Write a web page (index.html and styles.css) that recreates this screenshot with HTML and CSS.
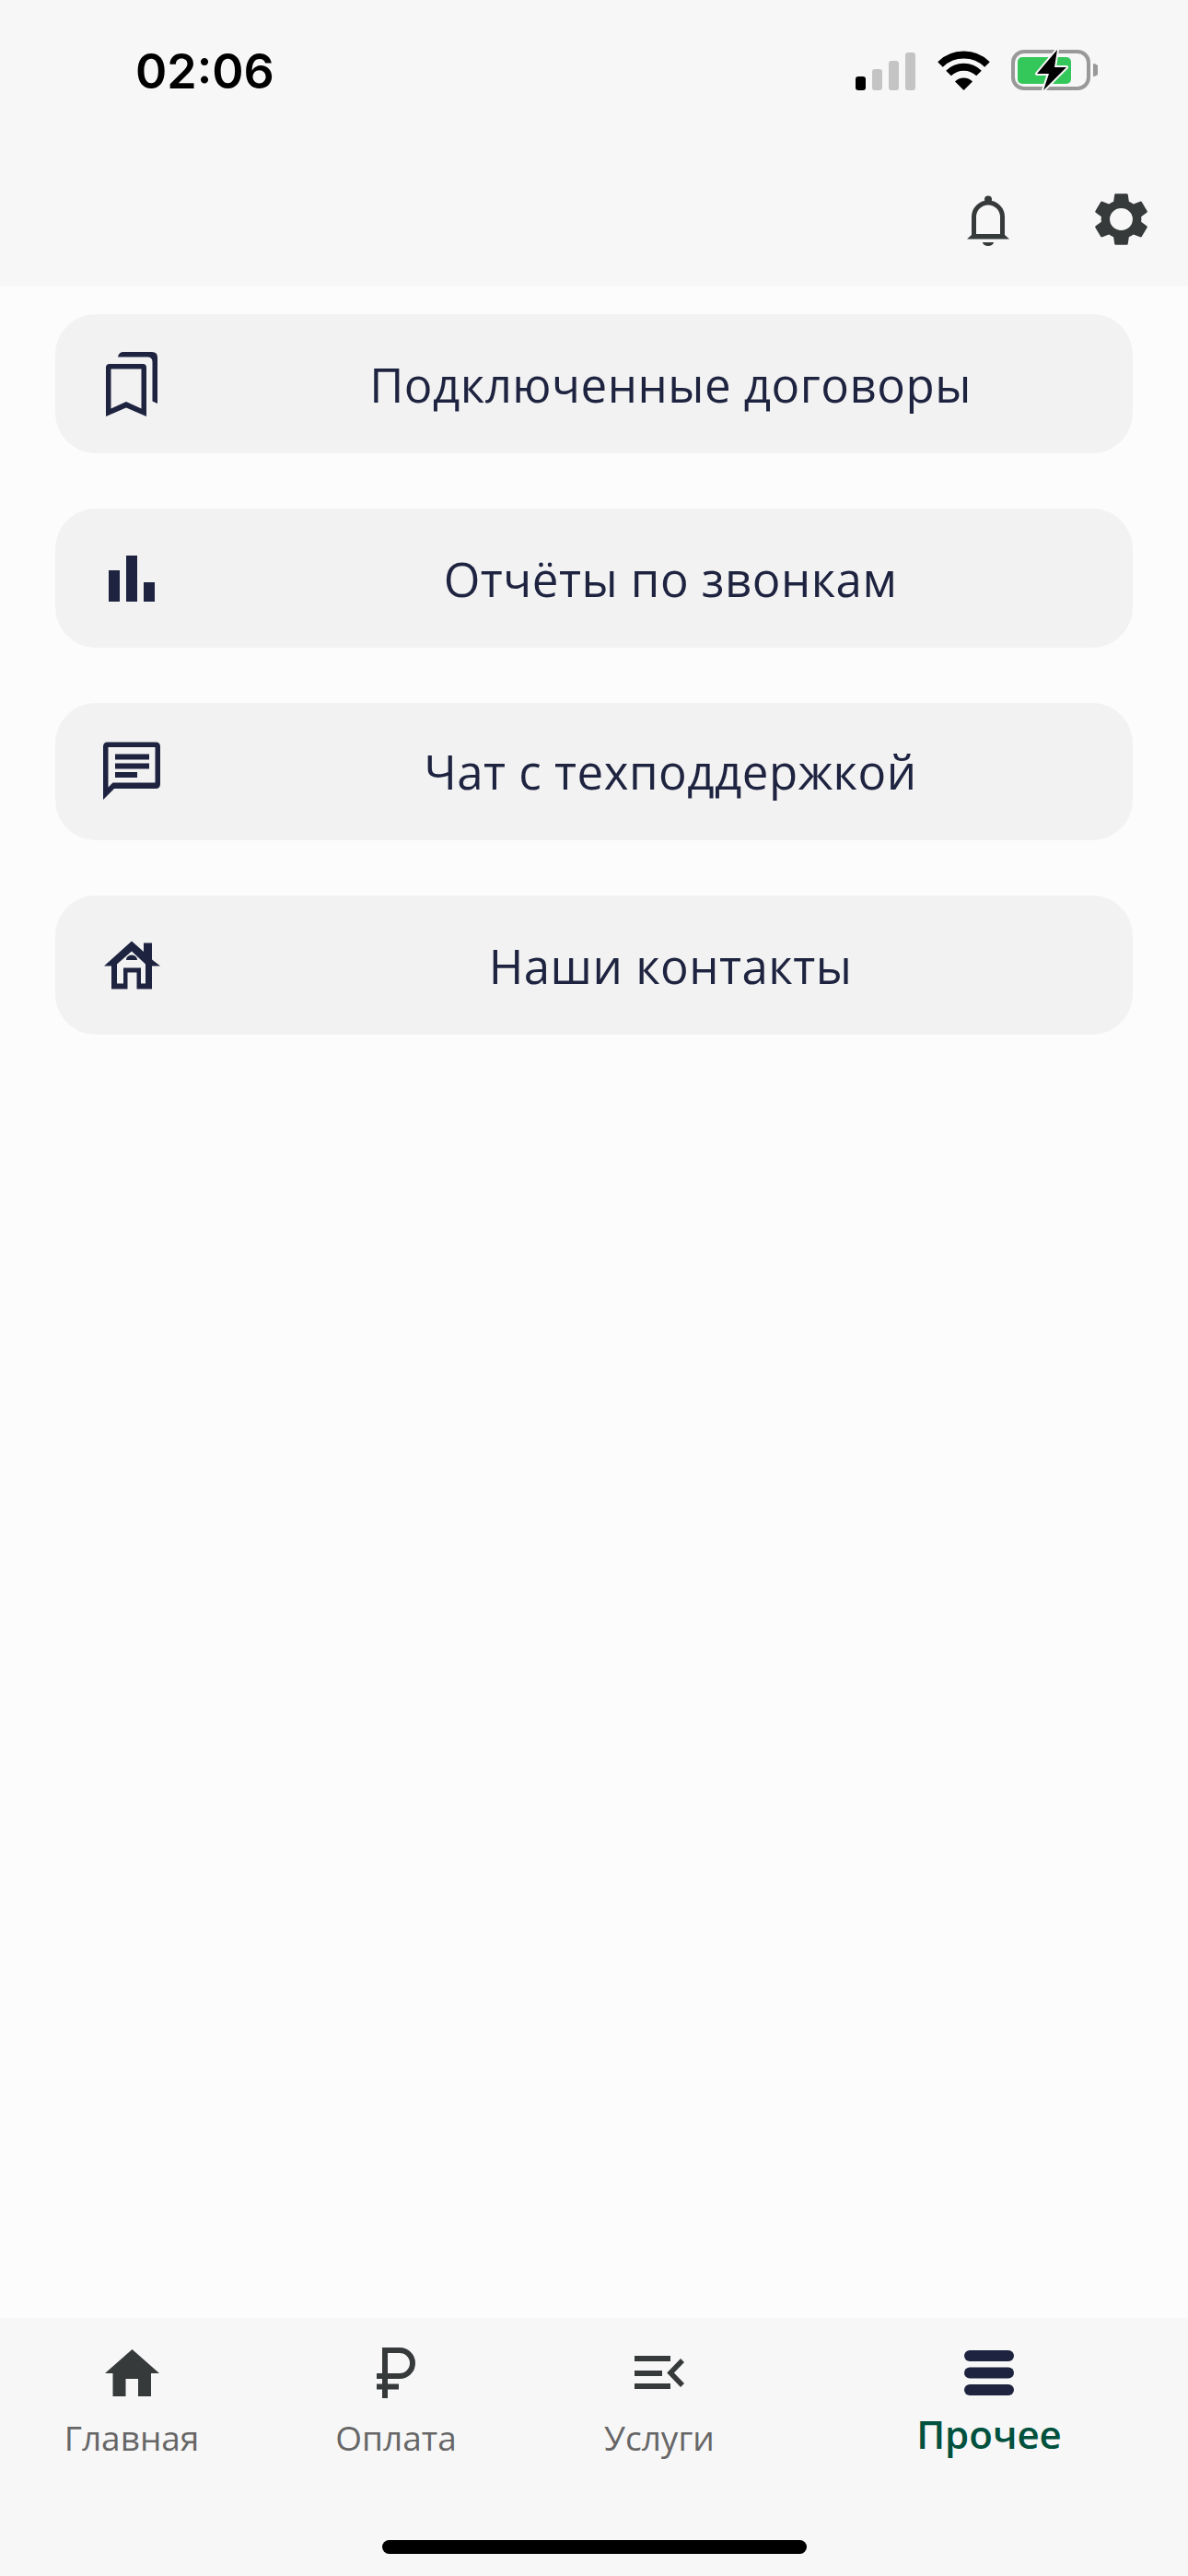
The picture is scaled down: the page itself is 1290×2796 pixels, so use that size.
FILE: index.html
```html
<!DOCTYPE html>
<html lang="ru">
<head>
<meta charset="utf-8">
<title>Прочее</title>
<link rel="stylesheet" href="styles.css">
</head>
<body>
<div class="screen">
  <header class="header">
    <div class="statusbar">
      <span class="time">02:06</span>
      <div class="status-icons">
        <svg class="ic-signal" viewBox="0 0 65 41" width="65" height="41"><rect x="0" y="26" width="11" height="15" rx="3" fill="#000"/><rect x="18" y="18" width="11" height="23" rx="3" fill="#c4c4c4"/><rect x="36" y="9" width="11" height="32" rx="3" fill="#c4c4c4"/><rect x="54" y="0" width="11" height="41" rx="3" fill="#c4c4c4"/></svg>
        <svg class="ic-wifi" viewBox="0 0 57 43" width="57" height="43"><path d="M3 15A36.5 36.5 0 0 1 54 15" fill="none" stroke="#000" stroke-width="8"/><path d="M12 24.500A23.500 23.500 0 0 1 45 24.500" fill="none" stroke="#000" stroke-width="8"/><path d="M28.500 43L19 33.500A13.500 13.500 0 0 1 38 33.500Z" fill="#000"/></svg>
        <svg class="ic-battery" viewBox="0 0 94 44" width="94" height="44"><rect x="2" y="2" width="82" height="40" rx="12" fill="none" stroke="#999" stroke-width="4"/><rect x="7" y="8" width="58" height="29" rx="5" fill="#34c759"/><path d="M89 15a7 7 0 0 1 0 14Z" fill="#999"/><polygon points="50,0 28,26 41,26 35,44 60,19 47,19" fill="#000" stroke="#f7f7f7" stroke-width="4" paint-order="stroke" stroke-linejoin="round"/></svg>
      </div>
    </div>
    <div class="actions">
      <svg class="ic-bell" viewBox="0 0 46 55" width="46" height="55"><circle cx="23" cy="4.500" r="4" fill="#373a3b"/><path d="M7.500 43V23.500a15.500 15.500 0 0 1 31 0V43" fill="none" stroke="#373a3b" stroke-width="5"/><path d="M0 47.500L6 42H40L46 47.500Z" fill="#373a3b"/><path d="M17 51H29A6 4 0 0 1 17 51Z" fill="#373a3b"/></svg>
      <svg class="ic-gear" viewBox="2.600 2 18.800 20" width="57" height="58" preserveAspectRatio="none"><path fill="#373a3b" fill-rule="evenodd" d="M19.140 12.940c.04-.3.06-.61.06-.94 0-.32-.02-.64-.07-.94l2.030-1.580c.18-.14.23-.41.12-.61l-1.920-3.320c-.12-.22-.37-.29-.59-.22l-2.390.96c-.5-.38-1.030-.7-1.620-.94l-.36-2.540c-.04-.24-.24-.41-.48-.41h-3.840c-.24 0-.43.17-.47.41l-.36 2.540c-.59.24-1.130.57-1.620.94l-2.390-.96c-.22-.08-.47 0-.59.22L2.740 8.870c-.12.21-.08.47.12.61l2.030 1.580c-.05.3-.09.63-.09.94s.02.64.07.94l-2.030 1.580c-.18.14-.23.41-.12.61l1.920 3.320c.12.22.37.29.59.22l2.390-.96c.5.38 1.030.7 1.620.94l.36 2.540c.05.24.24.41.48.41h3.840c.24 0 .44-.17.47-.41l.36-2.540c.59-.24 1.130-.56 1.620-.94l2.390.96c.22.08.47 0 .59-.22l1.920-3.320c.12-.22.07-.47-.12-.61l-2.010-1.580zM12 16.100a4.100 4.100 0 1 1 0-8.200 4.100 4.100 0 0 1 0 8.200z"/></svg>
    </div>
  </header>

  <main class="menu">
    <a class="card">
      <span class="card-icon"><svg viewBox="0 0 72 72" width="72" height="72"><path fill="#1e2340" fill-rule="evenodd" d="M8 71V18q0-4 4-4H48q4 0 4 4V71L30 61.500ZM13.500 62.500L30 55 46.500 62.500V19.500H13.500Z"/><path fill="#1e2340" d="M21 6.500Q22 1 27 1H58q6 0 6 6V57L58.500 54.500V12q0-5.500-5.500-5.500Z"/></svg></span>
      <span class="card-label">Подключенные договоры</span>
    </a>
    <a class="card">
      <span class="card-icon"><svg viewBox="0 0 72 72" width="72" height="72"><rect x="11" y="27" width="12" height="34" fill="#1e2340"/><rect x="30" y="11" width="12" height="50" fill="#1e2340"/><rect x="49" y="40" width="12" height="21" fill="#1e2340"/></svg></span>
      <span class="card-label">Отчёты по звонкам</span>
    </a>
    <a class="card card-short">
      <span class="card-icon"><svg viewBox="0 0 72 72" width="72" height="72"><path fill="#1e2340" fill-rule="evenodd" d="M5 8.500q0-5 5-5H62q5 0 5 5V49q0 5-5 5H17L5 66ZM10.500 52.500L15.500 47.500H61.500V9H10.500Z"/><rect x="18" y="16.500" width="37" height="6" fill="#1e2340"/><rect x="18" y="26.500" width="37" height="6" fill="#1e2340"/><rect x="18" y="36" width="24" height="6" fill="#1e2340"/></svg></span>
      <span class="card-label">Чат с техподдержкой</span>
    </a>
    <a class="card">
      <span class="card-icon"><svg viewBox="0 0 72 72" width="72" height="72"><path fill="#1e2340" fill-rule="evenodd" d="M36 9.500L49 21V11.500H58V29.500L67 36.500H58V61.500H41.500V43.500H31.500V61.500H14V36.500H6ZM36 20.500L20 34.500V55.500H27V38.500H46V55.500H51V34.500ZM30 30a6 5.500 0 0 1 12 0Z"/></svg></span>
      <span class="card-label">Наши контакты</span>
    </a>
  </main>

  <nav class="tabbar">
    <div class="tabs">
      <div class="tab">
        <span class="tab-icon"><svg viewBox="0 0 59 51" width="59" height="51"><path fill="#373a3b" d="M29.500 0L59 26H50V51H36V32H22.500V51H8.500V26H0Z"/></svg></span>
        <span class="tab-label">Главная</span>
      </div>
      <div class="tab">
        <span class="tab-icon"><svg viewBox="0 0 42 55" width="42" height="55"><path fill="none" stroke="#373a3b" stroke-width="6" d="M9 55V3H25A14 14 0 0 1 25 31H0M0 42.500H24"/></svg></span>
        <span class="tab-label">Оплата</span>
      </div>
      <div class="tab">
        <span class="tab-icon"><svg viewBox="0 0 54 37" width="54" height="37"><rect x="0" y="0" width="39" height="6" fill="#373a3b"/><rect x="0" y="16" width="30" height="6" fill="#373a3b"/><rect x="0" y="30" width="39" height="6" fill="#373a3b"/><path d="M52 5L39 18.500 52 32" fill="none" stroke="#373a3b" stroke-width="5.500"/></svg></span>
        <span class="tab-label">Услуги</span>
      </div>
      <div class="tab tab-active">
        <span class="tab-icon"><svg viewBox="0 0 54 49" width="54" height="49"><rect x="0" y="0" width="54" height="12" rx="6" fill="#1e2340"/><rect x="0" y="18.500" width="54" height="12" rx="6" fill="#1e2340"/><rect x="0" y="37" width="54" height="12" rx="6" fill="#1e2340"/></svg></span>
        <span class="tab-label">Прочее</span>
      </div>
    </div>
    <div class="home-indicator"></div>
  </nav>
</div>
</body>
</html>
```
FILE: styles.css
```css
* {
  box-sizing: border-box;
}

html,
body {
  margin: 0;
  padding: 0;
}

body {
  font-family: "Open Sans", "Noto Sans", sans-serif;
  background: #fcfcfc;
}

svg {
  display: block;
}

.screen {
  width: 1290px;
  height: 2796px;
  display: flex;
  flex-direction: column;
  background: #fcfcfc;
}

.header {
  height: 311px;
  flex: none;
  background: #f7f7f7;
  padding-top: 54px;
}

.statusbar {
  height: 44px;
  display: flex;
  align-items: center;
  justify-content: space-between;
  padding: 0 98px 0 147px;
}

.time {
  font-family: Inter, "Liberation Sans", sans-serif;
  font-size: 52px;
  font-weight: 600;
  line-height: 44px;
  padding-top: 3px;
  color: #000;
}

.status-icons {
  display: flex;
  align-items: flex-end;
  gap: 23px;
}

.ic-signal {
  margin-right: 1px;
}

.actions {
  display: flex;
  justify-content: flex-end;
  align-items: flex-end;
  gap: 93px;
  padding-right: 44px;
  margin-top: 111px;
}

.menu {
  flex: 1;
  padding: 30px 60px 0;
  display: flex;
  flex-direction: column;
  gap: 60px;
}

.card {
  height: 151px;
  display: grid;
  grid-template-columns: 166px 1fr;
  align-items: center;
  background: #f2f2f2;
  border-radius: 44px;
  color: #1e2340;
}

.card-short {
  height: 149px;
}

.card-short .card-label {
  padding-bottom: 2px;
}

.card-icon {
  padding-left: 47px;
}

.card-label {
  font-size: 51px;
  line-height: 68px;
  text-align: center;
  letter-spacing: 0.5px;
}

.tabbar {
  height: 280px;
  flex: none;
  background: #f7f7f7;
  padding-top: 31px;
}

.tabs {
  display: grid;
  grid-template-columns: 286px 288px 284px 1fr;
}

.tab {
  display: flex;
  flex-direction: column;
  align-items: center;
}

.tab-icon {
  height: 56px;
  display: flex;
  align-items: center;
}

.tab-label {
  margin-top: 18px;
  font-size: 37px;
  line-height: 50px;
  color: #666;
}

.tab-active .tab-label {
  margin-top: 14px;
  font-size: 42px;
  font-weight: 600;
  color: #00513d;
}

.home-indicator {
  width: 461px;
  height: 15px;
  margin: 86px auto 0;
  background: #000;
  border-radius: 8px;
}
```
